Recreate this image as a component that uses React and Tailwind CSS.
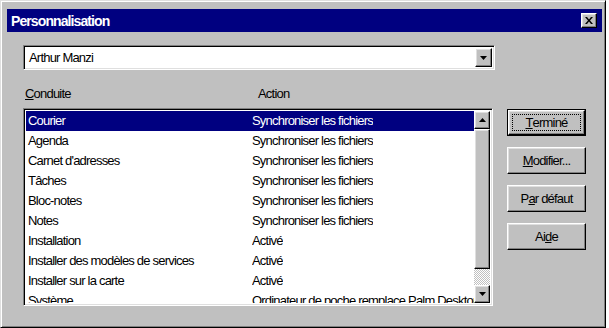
import React from 'react';

const FONT = "font-['Liberation_Sans',Arial,sans-serif] tracking-[-0.8px]";

const ROWS = [
  ['Courier', 'Synchroniser les fichiers'],
  ['Agenda', 'Synchroniser les fichiers'],
  ["Carnet d'adresses", 'Synchroniser les fichiers'],
  ['Tâches', 'Synchroniser les fichiers'],
  ['Bloc-notes', 'Synchroniser les fichiers'],
  ['Notes', 'Synchroniser les fichiers'],
  ['Installation', 'Activé'],
  ['Installer des modèles de services', 'Activé'],
  ['Installer sur la carte', 'Activé'],
  ['Système', 'Ordinateur de poche remplace Palm Desktop'],
];

// raised 3d frame used by buttons, thumb, arrows
const RAISED = 'bg-[#c0c0c0] border border-t-white border-l-white border-r-black border-b-black shadow-[inset_-1px_-1px_#808080,inset_1px_1px_#dfdfdf]';
const SUNKEN = 'border border-t-[#808080] border-l-[#808080] border-r-white border-b-white shadow-[inset_1px_1px_#000,inset_-1px_-1px_#dfdfdf]';

function Arrow({ up }) {
  return (
    <svg width="7" height="4" viewBox="0 0 7 4">
      {up ? <path d="M3.5 0 L7 4 L0 4 Z" fill="#000" /> : <path d="M0 0 L7 0 L3.5 4 Z" fill="#000" />}
    </svg>
  );
}

function Button({ children, isDefault }) {
  if (isDefault) return (
    <div className="w-[79px] h-[27px] border border-black">
      <div className={`${RAISED} h-full flex items-center justify-center p-[3px]`}>
        <div className="w-full h-full border border-dotted border-black flex items-center justify-center text-[13px] text-black">
          {children}
        </div>
      </div>
    </div>
  );
  return (
    <div className={`${RAISED} w-[79px] h-[27px] flex items-center justify-center text-[13px] text-black`}>
      {children}
    </div>
  );
}

export default function App() {
  return (
    <div className={`w-[609px] h-[328px] bg-white ${FONT}`}>
      <div className="w-[606px] h-[328px] bg-[#c0c0c0] border border-t-[#dfdfdf] border-l-[#dfdfdf] border-r-black border-b-black shadow-[inset_1px_1px_#fff,inset_-1px_-1px_#808080] pl-[6px] pt-[8px] pr-[3px] flex flex-col">
        {/* title bar */}
        <div className="h-[23px] bg-[#000080] flex items-center justify-between pl-[4px] pr-[5px]">
          <span className="text-white font-bold text-[14px] tracking-[-0.9px] leading-none">Personnalisation</span>
          <div className={`${RAISED} w-[16px] h-[15px] flex items-center justify-center`}>
            <svg width="8" height="7" viewBox="0 0 8 7">
              <path d="M0 0 L2 0 L4 2.5 L6 0 L8 0 L5 3.5 L8 7 L6 7 L4 4.5 L2 7 L0 7 L3 3.5 Z" fill="#000" />
            </svg>
          </div>
        </div>

        <div className="flex">
          {/* left column */}
          <div className="ml-[16px] mt-[13px] w-[472px] flex flex-col">
            <div className={`${SUNKEN} h-[25px] bg-white flex items-center pl-[5px] pr-[2px]`}>
              <span className="flex-1 text-[13px] text-black">Arthur Manzi</span>
              <div className={`${RAISED} w-[17px] h-[19px] flex items-center justify-center`}>
                <Arrow />
              </div>
            </div>

            <div className="mt-[16px] h-[15px] flex items-center text-[13px] text-black">
              <span className="w-[235px] pl-[2px]"><u>C</u>onduite</span>
              <span>Action</span>
            </div>

            <div className={`${SUNKEN} mt-[7px] w-[470px] h-[198px] bg-white flex p-[2px]`}>
              <div className="w-[450px] overflow-hidden">
                {ROWS.map(([name, action], i) => (
                  <div key={name}
                    className={`h-[20px] flex items-center text-[13px] whitespace-nowrap ${i === 0 ? 'bg-[#000080] text-white' : 'text-black'}`}>
                    <span className="w-[226px] pl-[2px] shrink-0">{name}</span>
                    <span className="overflow-hidden">{action}</span>
                  </div>
                ))}
              </div>
              {/* scrollbar */}
              <div className="w-[16px] flex flex-col">
                <div className={`${RAISED} h-[18px] flex items-center justify-center`}><Arrow up /></div>
                <div className={`${RAISED} h-[140px]`} />
                <div className="flex-1 bg-[repeating-conic-gradient(#c0c0c0_0%_25%,#fff_0%_50%)] bg-[length:2px_2px]" />
                <div className={`${RAISED} h-[18px] flex items-center justify-center`}><Arrow /></div>
              </div>
            </div>
          </div>

          {/* buttons */}
          <div className="ml-[12px] mt-[77px] flex flex-col gap-[11px]">
            <Button isDefault><u>T</u>erminé</Button>
            <Button><u>M</u>odifier...</Button>
            <Button>P<u>a</u>r défaut</Button>
            <Button>Ai<u>d</u>e</Button>
          </div>
        </div>
      </div>
    </div>
  );
}
